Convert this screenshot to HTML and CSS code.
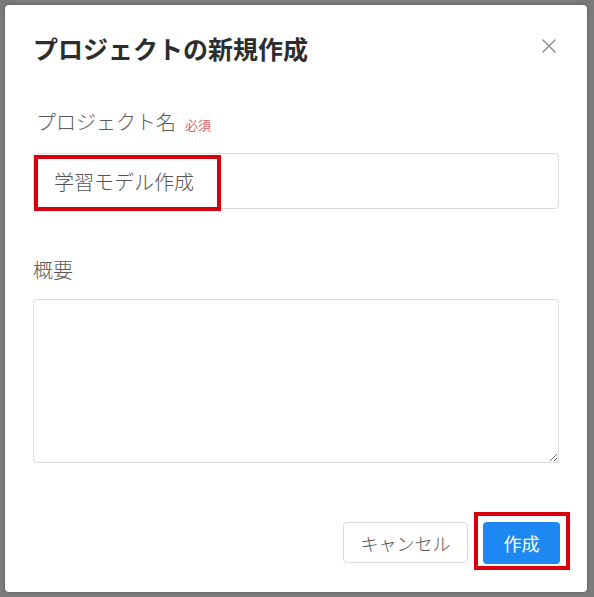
FILE: index.html
```html
<!DOCTYPE html>
<html lang="ja">
<head>
<meta charset="utf-8">
<title>プロジェクトの新規作成</title>
<link rel="stylesheet" href="styles.css">
</head>
<body>
<div class="dialog">
  <div class="header">
    <h1 class="title">プロジェクトの新規作成</h1>
    <svg class="close" width="14" height="14" viewBox="0 0 14 14" aria-label="閉じる">
      <path d="M1 1 L13 13 M13 1 L1 13" stroke="#8a8a8a" stroke-width="1.4" fill="none" stroke-linecap="round"/>
    </svg>
  </div>
  <div class="label label-name">プロジェクト名<span class="req">必須</span></div>
  <div class="field">
    <input class="input" type="text" value="学習モデル作成">
    <div class="mark mark-input"></div>
  </div>
  <div class="label label-desc">概要</div>
  <textarea class="textarea"></textarea>
  <div class="footer">
    <button class="btn btn-cancel">キャンセル</button>
    <div class="create-wrap">
      <button class="btn btn-primary">作成</button>
      <div class="mark mark-btn"></div>
    </div>
  </div>
</div>
</body>
</html>
```
FILE: styles.css
```css
html, body {
  margin: 0;
  padding: 0;
}
body {
  background: #7b7b7b;
  width: 594px;
  height: 597px;
  overflow: hidden;
  font-family: "Noto Sans CJK JP", "Noto Sans", sans-serif;
}
.dialog {
  margin: 5px 0 0 5px;
  width: 582px;
  height: 587px;
  box-sizing: border-box;
  padding: 26px 28px 28px;
  background: #fff;
  border-radius: 4px;
  box-shadow: 0 0 3px rgba(0,0,0,0.35);
  display: flex;
  flex-direction: column;
}
.header {
  display: flex;
  justify-content: space-between;
  align-items: flex-start;
  height: 35px;
}
.title {
  margin: 0;
  font-size: 25px;
  line-height: 35px;
  font-weight: 700;
  color: #2d2d2d;
}
.close {
  margin-top: 8px;
  margin-right: 3px;
}
.label {
  font-size: 20px;
  line-height: 28px;
  height: 28px;
  font-weight: 300;
  color: #5a5a5a;
  display: flex;
  align-items: baseline;
}
.label-name {
  margin-top: 42px;
  padding-left: 3px;
}
.req {
  font-size: 13px;
  font-weight: 400;
  color: #e06262;
  margin-left: 9px;
}
.field {
  position: relative;
  margin-top: 17px;
}
.input {
  display: block;
  width: 100%;
  height: 56px;
  box-sizing: border-box;
  border: 1px solid #dcdcdc;
  border-radius: 4px;
  padding: 0 20px;
  font-family: inherit;
  font-size: 20px;
  font-weight: 300;
  color: #555;
  background: #fff;
  outline: none;
}
.mark {
  position: absolute;
  border: 4px solid #d9000d;
  box-sizing: border-box;
  pointer-events: none;
}
.mark-input {
  left: 1px;
  top: 2px;
  width: 187px;
  height: 56px;
}
.label-desc {
  margin-top: 47px;
}
.textarea {
  display: block;
  margin-top: 15px;
  width: 100%;
  height: 164px;
  box-sizing: border-box;
  border: 1px solid #dcdcdc;
  border-radius: 4px;
  resize: vertical;
  font-family: inherit;
  font-size: 16px;
  outline: none;
}
.footer {
  margin-top: 59px;
  display: flex;
  justify-content: flex-end;
  align-items: flex-end;
  gap: 15px;
  margin-right: -1px;
}
.btn {
  font-family: inherit;
  font-size: 18px;
  height: 42px;
  border-radius: 4px;
  padding: 0;
  cursor: pointer;
}
.btn-cancel {
  width: 125px;
  height: 41px;
  margin-bottom: 1px;
  background: #fff;
  border: 1px solid #dadada;
  color: #555;
  font-weight: 300;
}
.create-wrap {
  position: relative;
}
.btn-primary {
  display: block;
  width: 77px;
  background: #1e88f2;
  border: none;
  color: #fff;
}
.mark-btn {
  left: -9px;
  top: -10px;
  width: 96px;
  height: 58px;
}
```
